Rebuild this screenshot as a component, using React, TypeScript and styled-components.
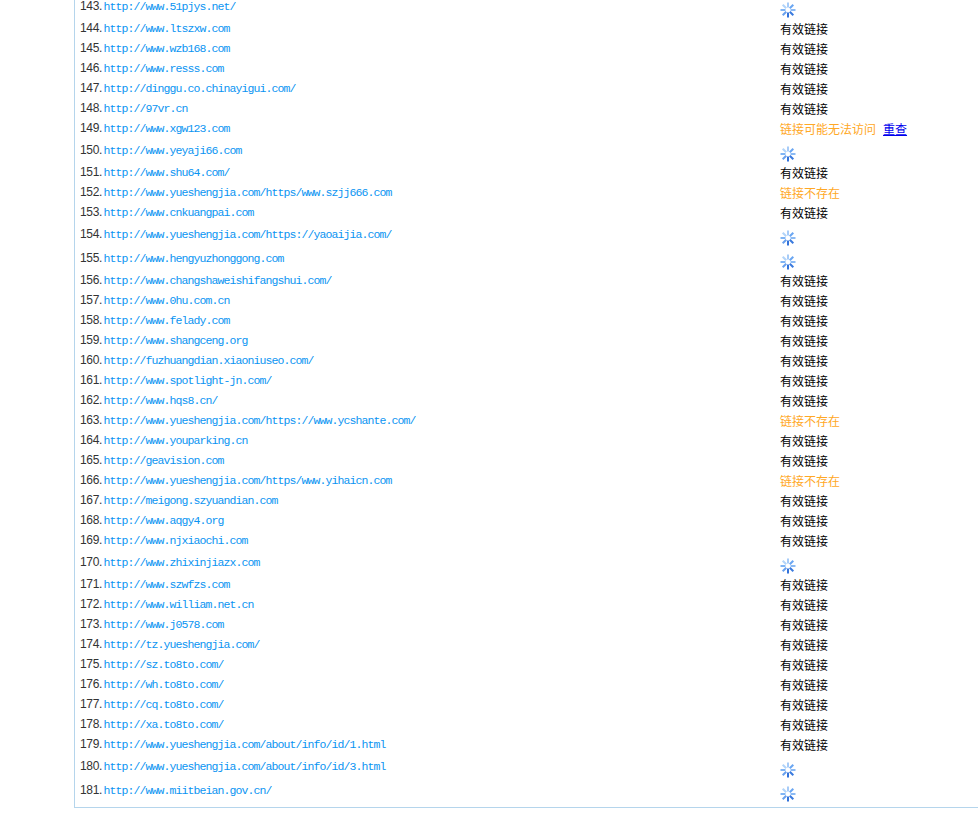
import React from 'react';
import styled, { createGlobalStyle } from 'styled-components';

type Status = 'ok' | 'loading' | 'missing' | 'maybe';

const ROWS: [string, Status][] = [
  ['http://www.51pjys.net/', 'loading'],
  ['http://www.ltszxw.com', 'ok'],
  ['http://www.wzb168.com', 'ok'],
  ['http://www.resss.com', 'ok'],
  ['http://dinggu.co.chinayigui.com/', 'ok'],
  ['http://97vr.cn', 'ok'],
  ['http://www.xgw123.com', 'maybe'],
  ['http://www.yeyaji66.com', 'loading'],
  ['http://www.shu64.com/', 'ok'],
  ['http://www.yueshengjia.com/https/www.szjj666.com', 'missing'],
  ['http://www.cnkuangpai.com', 'ok'],
  ['http://www.yueshengjia.com/https://yaoaijia.com/', 'loading'],
  ['http://www.hengyuzhonggong.com', 'loading'],
  ['http://www.changshaweishifangshui.com/', 'ok'],
  ['http://www.0hu.com.cn', 'ok'],
  ['http://www.felady.com', 'ok'],
  ['http://www.shangceng.org', 'ok'],
  ['http://fuzhuangdian.xiaoniuseo.com/', 'ok'],
  ['http://www.spotlight-jn.com/', 'ok'],
  ['http://www.hqs8.cn/', 'ok'],
  ['http://www.yueshengjia.com/https://www.ycshante.com/', 'missing'],
  ['http://www.youparking.cn', 'ok'],
  ['http://geavision.com', 'ok'],
  ['http://www.yueshengjia.com/https/www.yihaicn.com', 'missing'],
  ['http://meigong.szyuandian.com', 'ok'],
  ['http://www.aqgy4.org', 'ok'],
  ['http://www.njxiaochi.com', 'ok'],
  ['http://www.zhixinjiazx.com', 'loading'],
  ['http://www.szwfzs.com', 'ok'],
  ['http://www.william.net.cn', 'ok'],
  ['http://www.j0578.com', 'ok'],
  ['http://tz.yueshengjia.com/', 'ok'],
  ['http://sz.to8to.com/', 'ok'],
  ['http://wh.to8to.com/', 'ok'],
  ['http://cq.to8to.com/', 'ok'],
  ['http://xa.to8to.com/', 'ok'],
  ['http://www.yueshengjia.com/about/info/id/1.html', 'ok'],
  ['http://www.yueshengjia.com/about/info/id/3.html', 'loading'],
  ['http://www.miitbeian.gov.cn/', 'loading'],
];

const SPOKES = [
  { angle: 0, color: '#a6cbf8' },
  { angle: 45, color: '#6aa6f2' },
  { angle: 90, color: '#8bbaf4' },
  { angle: 135, color: '#3a7ade' },
  { angle: 180, color: '#3272da' },
  { angle: 225, color: '#68a0ee' },
  { angle: 270, color: '#7fb4f4' },
  { angle: 315, color: '#b2d4f9' },
];

const Spinner: React.FC = () => (
  <SpinnerIcon viewBox="0 0 16 16">
    {SPOKES.map(s => (
      <line
        key={s.angle}
        x1="8"
        y1="0.5"
        x2="8"
        y2="5.5"
        stroke={s.color}
        strokeWidth="2"
        transform={`rotate(${s.angle} 8 8)`}
      />
    ))}
  </SpinnerIcon>
);

const StatusCell: React.FC<{ status: Status }> = ({ status }) => {
  if (status === 'loading') return <Spinner />;
  if (status === 'ok') return <StatusText>有效链接</StatusText>;
  if (status === 'missing') return <StatusText $warn>链接不存在</StatusText>;
  return (
    <>
      <StatusText $warn>链接可能无法访问</StatusText>
      <Recheck href="#">重查</Recheck>
    </>
  );
};

const App: React.FC = () => {
  return (
    <Panel>
      <GlobalStyle />
      <List>
        {ROWS.map(([url, status], i) => {
          const tall = status === 'loading';
          return (
            <Row key={url} $tall={tall}>
              <Num $tall={tall}>{143 + i}.</Num>
              <Url $tall={tall} href="#">{url}</Url>
              <Result $tall={tall}>
                <StatusCell status={status} />
              </Result>
            </Row>
          );
        })}
      </List>
    </Panel>
  );
};

export default App;

const GlobalStyle = createGlobalStyle`
  html, body {
    margin: 0;
    padding: 0;
    height: 813px;
    overflow: hidden;
    background: #fff;
  }
`;

const Panel = styled.div`
  margin: -5px 0 0 74px;
  border-left: 1px solid #b5d5ec;
  border-bottom: 1px solid #b5d5ec;
  padding-bottom: 4px;
  font-family: "Liberation Sans", "Noto Sans CJK SC", sans-serif;
  font-size: 12px;
`;

const List = styled.ol`
  list-style: none;
  margin: 0;
  padding: 0;
`;

const Row = styled.li<{ $tall?: boolean }>`
  display: grid;
  grid-template-columns: 23.5px 676.5px 1fr;
  padding-left: 5px;
  height: ${p => (p.$tall ? 24 : 20)}px;
  line-height: 20px;
`;

const Num = styled.span<{ $tall?: boolean }>`
  color: #333;
  letter-spacing: -0.35px;
  line-height: 19px;
  padding-top: ${p => (p.$tall ? 2 : 0)}px;
`;

const Url = styled.a<{ $tall?: boolean }>`
  color: #0a94f2;
  text-decoration: none;
  font-family: "Liberation Mono", "DejaVu Sans Mono", monospace;
  font-size: 11.5px;
  letter-spacing: -0.9px;
  white-space: nowrap;
  padding-top: ${p => (p.$tall ? 2 : 0)}px;
`;

const Result = styled.div<{ $tall?: boolean }>`
  display: flex;
  align-items: flex-start;
  white-space: nowrap;
  padding-top: ${p => (p.$tall ? 7 : 1)}px;
`;

const StatusText = styled.span<{ $warn?: boolean }>`
  color: ${p => (p.$warn ? '#ffa826' : '#000')};
`;

const Recheck = styled.a`
  color: #0000ee;
  text-decoration: underline;
  margin-left: 7px;
`;

const SpinnerIcon = styled.svg`
  display: block;
  width: 16px;
  height: 16px;
`;
